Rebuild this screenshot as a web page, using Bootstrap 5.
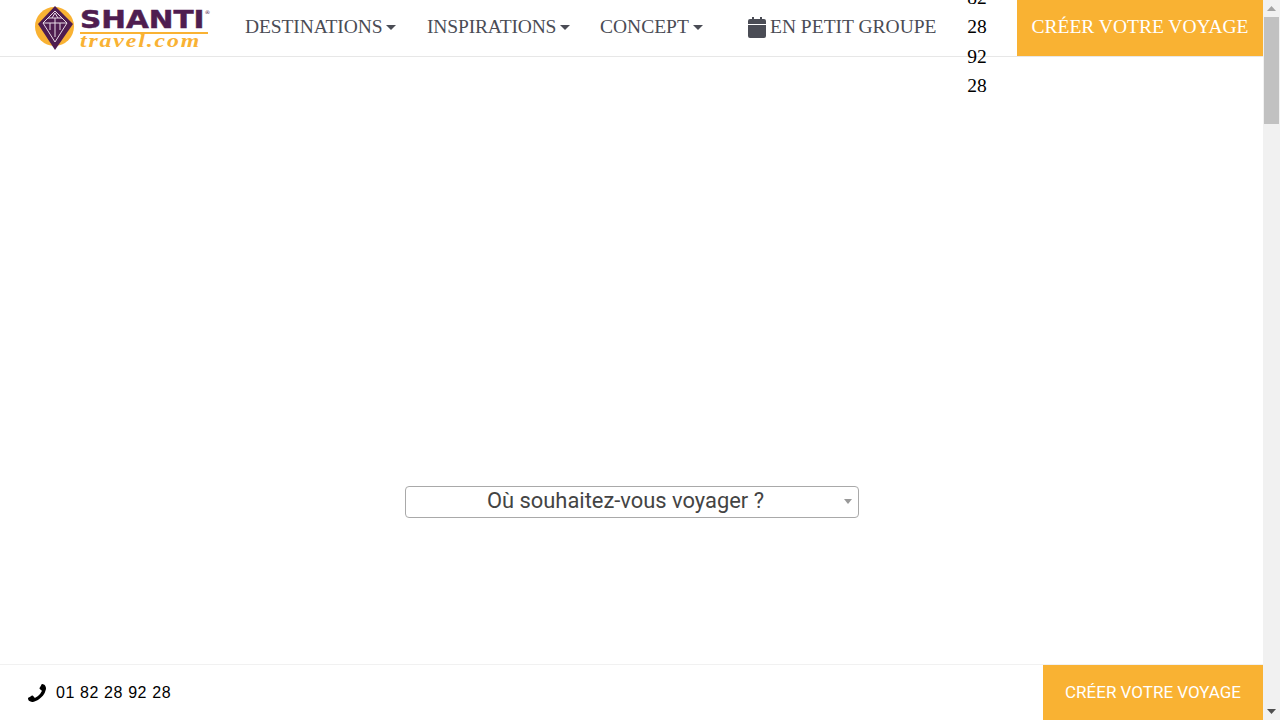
<!DOCTYPE html>
<html lang="fr">
<head>
  <meta charset="UTF-8" />
  <title>Shanti Travel</title>
  <link href="https://cdn.jsdelivr.net/npm/bootstrap@5.3.2/dist/css/bootstrap.min.css" rel="stylesheet">
  <style>
    html, body { height: 720px; overflow: hidden; background: #fff; }
    a { text-decoration: none; }
    .app-col { width: 1263px; height: 720px; }
    .top-bar { height: 57px; border-bottom: 1px solid #e7e7e7; font-family: "Liberation Serif", serif; font-size: 19.5px; color: #4a4c55; }
    .brand-box { width: 245px; padding-left: 35px; gap: 5px; }
    .brand-words { width: 128px; }
    .brand-name { font-family: "DejaVu Sans", sans-serif; font-weight: 700; font-size: 25px; color: #4f1d50; height: 24px; line-height: 23px; transform: scaleX(1.18); transform-origin: left center; white-space: nowrap; -webkit-text-stroke: .5px #4f1d50; }
    .brand-mark { font-size: 5px; line-height: 0; vertical-align: 14px; font-weight: 400; -webkit-text-stroke: 0; }
    .brand-sub { font-family: "Liberation Serif", serif; font-weight: 700; font-style: italic; font-size: 19px; color: #f9b233; border-top: 2px solid #f9b233; height: 16px; line-height: 13px; }
    .brand-sub span { display: inline-block; letter-spacing: 1.5px; transform: scaleX(1.25); transform-origin: left center; }
    .menu-item { white-space: nowrap; color: #4a4c55; padding-bottom: 2px; }
    .menu-dest { width: 182px; letter-spacing: -.1px; }
    .menu-insp { width: 173px; letter-spacing: -.15px; }
    .menu-conc { width: 148px; }
    .menu-group { width: 219px; }
    .caret-down { display: inline-block; width: 0; height: 0; margin-left: 4px; vertical-align: 3px; border-left: 5px solid transparent; border-right: 5px solid transparent; border-top: 5px solid #4a4c55; }
    .phone-col { width: 20px; font-size: 19.5px; line-height: 29.3px; color: #000; text-align: center; position: relative; z-index: 2; padding-bottom: 2px; }
    .cta-top { width: 246px; height: 56px; background: #f9b233; color: #fff; font-size: 19.5px; padding-bottom: 2px; }
    .dest-select { width: 454px; height: 32px; margin-top: 429px; margin-right: -1px; border: 1px solid #a9a9a9; border-radius: 4px; font-family: Roboto, sans-serif; font-size: 21.9px; line-height: 28px; color: #444; padding-right: 13px; }
    .select-arrow { position: absolute; right: 6px; top: 12px; border-left: 4px solid transparent; border-right: 4px solid transparent; border-top: 5px solid #999; }
    .bottom-bar { height: 56px; border-top: 1px solid #f1f1f1; }
    .bottom-phone { padding-left: 28px; gap: 10px; font-family: "Liberation Sans", sans-serif; font-size: 16px; color: #000; letter-spacing: .6px; }
    .cta-bottom { width: 220px; height: 55px; background: #f9b233; color: #fff; font-family: Roboto, sans-serif; font-size: 17px; }
    .fake-scroll { width: 17px; height: 720px; background: #f1f1f1; }
    .scroll-btn { height: 17px; }
    .scroll-thumb { height: 107px; background: #c1c1c1; margin: 0 1px; }
  </style>
</head>
<body>
  <div class="d-flex">
    <div class="app-col d-flex flex-column">

      <!-- Header -->
      <header class="top-bar d-flex align-items-center">
        <a class="brand-box d-flex align-items-center flex-shrink-0">
          <svg width="40" height="46" viewBox="0 0 40 46">
            <circle cx="19.500" cy="21.500" r="19.500" fill="#f9b233"/>
            <path d="M20 1 L38 19 L20 45 L3 19 Z" fill="#4f1d50"/>
            <path d="M20 6 L32 18 L20 37 L8 18 Z M8 18 H32 M13 13 H27 M20 13 V32 M15 18 V25 M25 18 V25 M17 13 L20 8 L23 13" fill="none" stroke="#e8dce6" stroke-width="1"/>
          </svg>
          <div class="brand-words">
            <div class="brand-name">SHANTI<span class="brand-mark">®</span></div>
            <div class="brand-sub"><span>travel.com</span></div>
          </div>
        </a>
        <a class="menu-item menu-dest">DESTINATIONS<span class="caret-down"></span></a>
        <a class="menu-item menu-insp">INSPIRATIONS<span class="caret-down"></span></a>
        <a class="menu-item menu-conc">CONCEPT<span class="caret-down"></span></a>
        <a class="menu-item menu-group d-flex align-items-center gap-1">
          <svg width="18" height="21" viewBox="0 0 18 21"><path d="M4 0h2v3H4zM12 0h2v3h-2z" fill="#4a4c55"/><path d="M2 2h14a2 2 0 0 1 2 2v3H0V4a2 2 0 0 1 2-2zM0 8h18v11a2 2 0 0 1-2 2H2a2 2 0 0 1-2-2z" fill="#4a4c55"/></svg>
          EN PETIT GROUPE
        </a>
        <div class="phone-col flex-shrink-0">01 82 28 92 28</div>
        <a class="cta-top d-flex align-items-center justify-content-center ms-auto flex-shrink-0 align-self-start">CRÉER VOTRE VOYAGE</a>
      </header>

      <!-- Search -->
      <main class="flex-grow-1 d-flex justify-content-center">
        <div class="dest-select position-relative text-center">
          Où souhaitez-vous voyager ?
          <span class="select-arrow"></span>
        </div>
      </main>

      <!-- Bottom bar -->
      <footer class="bottom-bar d-flex align-items-center justify-content-between">
        <div class="bottom-phone d-flex align-items-center">
          <svg width="18" height="18" viewBox="0 128 1408 1408"><path transform="translate(1408 0) scale(-1 1)" d="M1408 1240q0 27-10 70.500t-21 68.500q-21 50-122 106-94 51-186 51-27 0-53-3.500t-57.500-12.500-47-14.500-55.500-20.500-49-18q-98-35-175-83-127-79-264-216t-216-264q-48-77-83-175-3-9-18-49t-20.500-55.500-14.500-47-12.500-57.500-3.500-53q0-92 51-186 56-101 106-122 25-11 68.500-21t70.500-10q14 0 21 3 18 6 53 76 11 19 30 54t35 63.500 31 53.500q3 4 17.500 25t21.500 35.500 7 28.500q0 20-28.500 50t-62 55-62 53-28.500 46q0 9 5 22.500t8.500 20.500 14 24 11.500 19q76 137 174 235t235 174q2 1 19 11.500t24 14 20.500 8.500 22.500 5q18 0 46-28.500t53-62 55-62 50-28.500q14 0 28.500 7t35.500 21.500 25 17.500q25 15 53.500 31t63 35 54 30q70 35 76 53 3 7 3 21z" fill="#000"/></svg>
          01 82 28 92 28
        </div>
        <a class="cta-bottom d-flex align-items-center justify-content-center">CRÉER VOTRE VOYAGE</a>
      </footer>
    </div>

    <!-- Scrollbar -->
    <div class="fake-scroll d-flex flex-column flex-shrink-0">
      <div class="scroll-btn d-flex align-items-center justify-content-center"><svg width="9" height="5"><path d="M4.500 0L9 5H0z" fill="#a3a3a3"/></svg></div>
      <div class="scroll-thumb"></div>
      <div class="flex-grow-1"></div>
      <div class="scroll-btn d-flex align-items-center justify-content-center"><svg width="9" height="5"><path d="M0 0H9L4.500 5z" fill="#505050"/></svg></div>
    </div>
  </div>
  <script src="https://cdn.jsdelivr.net/npm/bootstrap@5.3.2/dist/js/bootstrap.bundle.min.js"></script>
</body>
</html>
